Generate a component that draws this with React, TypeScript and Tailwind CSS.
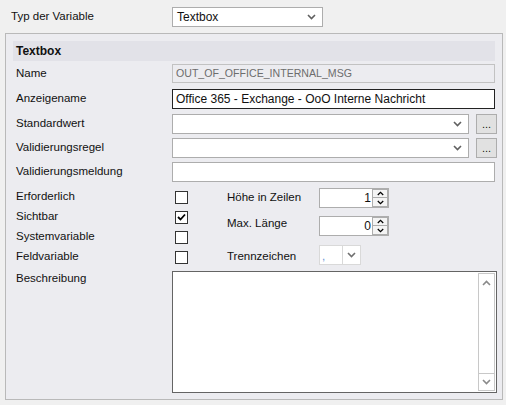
import React from 'react'

function Chevron({ up = false, className = '' }: { up?: boolean; className?: string }) {
  return (
    <svg width="9" height="6" viewBox="0 0 9 6" className={className} aria-hidden>
      <path
        d={up ? 'M1 5 L4.5 1.5 L8 5' : 'M1 1 L4.5 4.5 L8 1'}
        fill="none"
        stroke="currentColor"
        strokeWidth="1.6"
      />
    </svg>
  )
}

function Combo({ value = '', width }: { value?: string; width: string }) {
  return (
    <div className={`${width} h-[20px] bg-white border border-[#adadad] flex items-center pl-[3px] pr-[6px]`}>
      <span className="flex-1 truncate">{value}</span>
      <Chevron className="text-[#606060]" />
    </div>
  )
}

function DotsButton() {
  return (
    <div className="w-[21px] h-[20px] ml-[7px] bg-[#e1e1e1] border border-[#adadad] flex items-end justify-center pb-[3px] leading-none text-[11px]">
      ...
    </div>
  )
}

function Check({ checked = false }: { checked?: boolean }) {
  return (
    <div className="w-[13px] h-[13px] bg-white border border-[#333] flex items-center justify-center">
      {checked && (
        <svg width="9" height="8" viewBox="0 0 9 8" aria-hidden>
          <path d="M1 4 L3.5 6.5 L8 1.5" fill="none" stroke="#000" strokeWidth="1.8" />
        </svg>
      )}
    </div>
  )
}

function Spin({ value }: { value: string }) {
  return (
    <div className="w-[70px] h-[20px] bg-white border border-[#adadad] flex text-[12px]">
      <span className="flex-1 text-right pr-[1px] leading-[18px]">{value}</span>
      <div className="w-[16px] flex flex-col">
        <div className="h-[9px] border border-[#adadad] bg-[#f4f4f4] flex items-center justify-center">
          <Chevron up className="w-[7px] h-[5px] text-black" />
        </div>
        <div className="h-[9px] border border-t-0 border-[#adadad] bg-[#f4f4f4] flex items-center justify-center">
          <Chevron className="w-[7px] h-[5px] text-black" />
        </div>
      </div>
    </div>
  )
}

const labelRows: { label: string; checked: boolean }[] = [
  { label: 'Erforderlich', checked: false },
  { label: 'Sichtbar', checked: true },
  { label: 'Systemvariable', checked: false },
  { label: 'Feldvariable', checked: false },
]

export default function App() {
  return (
    <div className="w-[506px] h-[405px] bg-[#f0f0f0] pt-[7px] text-[11.5px] text-[#111] font-['Liberation_Sans',Arial,sans-serif] overflow-hidden">
      {/* Typ der Variable */}
      <div className="flex items-center h-[20px]">
        <span className="ml-[11px] w-[161px]">Typ der Variable</span>
        <div className="w-[151px] h-[20px] bg-white border border-[#adadad] flex items-center pl-[4px] pr-[6px] text-[12px]">
          <span className="flex-1">Textbox</span>
          <Chevron className="text-[#606060]" />
        </div>
      </div>

      {/* Panel */}
      <div className="mt-[6px] ml-[5px] w-[498px] h-[367px] border border-[#b9b9b9] bg-[#ececf0] pt-[7px] pl-[7px]">
        <div className="w-[482px] h-[20px] bg-[#e2e2e8] pl-[3px] flex items-center font-bold text-[12px]">
          Textbox
        </div>

        <div className="pl-[3px]">
          <div className="flex items-center mt-[3px] h-[19px]">
            <span className="w-[156px]">Name</span>
            <div className="w-[323px] h-[19px] border border-[#c2c2c2] bg-[#ececf0] text-[#6d6d6d] text-[10.6px] pl-[3px] flex items-center">
              OUT_OF_OFFICE_INTERNAL_MSG
            </div>
          </div>

          <div className="flex items-center mt-[6px] h-[20px]">
            <span className="w-[156px]">Anzeigename</span>
            <div className="w-[323px] h-[20px] border border-[#222] bg-white pl-[3px] flex items-center text-[12px]">
              Office 365 - Exchange - OoO Interne Nachricht
            </div>
          </div>

          <div className="flex items-center mt-[5px] h-[20px]">
            <span className="w-[156px]">Standardwert</span>
            <Combo width="w-[297px]" />
            <DotsButton />
          </div>

          <div className="flex items-center mt-[4px] h-[20px]">
            <span className="w-[156px]">Validierungsregel</span>
            <Combo width="w-[297px]" />
            <DotsButton />
          </div>

          <div className="flex items-center mt-[4px] h-[20px]">
            <span className="w-[156px]">Validierungsmeldung</span>
            <div className="w-[323px] h-[20px] border border-[#adadad] bg-white" />
          </div>

          {/* Checkboxes and numeric fields */}
          <div className="flex mt-[5px]">
            <div className="w-[211px] flex flex-col">
              {labelRows.map((r) => (
                <div key={r.label} className="h-[20px] flex items-center">
                  <span className="w-[159px]">{r.label}</span>
                  <Check checked={r.checked} />
                </div>
              ))}
            </div>
            <div className="flex flex-col">
              <div className="flex items-center h-[20px] mt-[1px]">
                <span className="w-[92px]">Höhe in Zeilen</span>
                <Spin value="1" />
              </div>
              <div className="flex items-center h-[20px] mt-[8px]">
                <span className="w-[92px] -mt-[4px]">Max. Länge</span>
                <Spin value="0" />
              </div>
              <div className="flex items-center h-[20px] mt-[9px]">
                <span className="w-[92px] mt-[4px]">Trennzeichen</span>
                <div className="w-[42px] h-[20px] border border-[#d9d9d9] bg-white flex">
                  <span className="w-[23px] border-r border-[#d9d9d9] text-[#6b8fd6] pl-[2px] leading-[20px]">,</span>
                  <div className="flex-1 flex items-center justify-center">
                    <Chevron className="text-[#707070]" />
                  </div>
                </div>
              </div>
            </div>
          </div>

          {/* Beschreibung */}
          <div className="flex mt-[4px]">
            <span className="w-[156px] leading-[14px]">Beschreibung</span>
            <div className="w-[325px] h-[122px] border border-[#646464] bg-white flex justify-end pr-[1px] py-[1px]">
              <div className="w-[17px] h-full border border-[#c8c8c8] flex flex-col justify-between">
                <div className="h-[17px] flex items-center justify-center">
                  <Chevron up className="text-[#8a8a8a]" />
                </div>
                <div className="h-[17px] border-t border-[#c8c8c8] flex items-center justify-center">
                  <Chevron className="text-[#8a8a8a]" />
                </div>
              </div>
            </div>
          </div>
        </div>
      </div>
    </div>
  )
}
